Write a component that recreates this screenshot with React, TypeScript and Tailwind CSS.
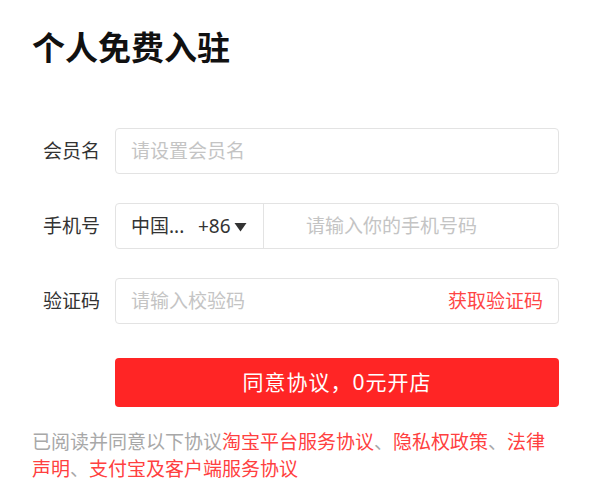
import { useState } from 'react'

const fieldClass =
  'h-[46px] w-[444px] rounded-[4px] border border-[#e3e3e3] bg-white text-[19px] text-[#333]'

function Label({ children }: { children: string }) {
  return <div className="mr-[15px] w-[68px] text-right text-[19px] leading-[46px] text-[#333]">{children}</div>
}

export default function App() {
  const [name, setName] = useState('')
  const [phone, setPhone] = useState('')
  const [code, setCode] = useState('')

  return (
    <div className="min-h-[495px] w-[600px] bg-white px-8 pt-[28px] font-['Noto_Sans','Noto_Sans_CJK_SC',sans-serif]">
      <h1 className="text-[33px] font-bold leading-[40px] text-[#111]">个人免费入驻</h1>

      <div className="mt-[60px] flex items-center">
        <Label>会员名</Label>
        <input
          value={name}
          onChange={(e) => setName(e.target.value)}
          placeholder="请设置会员名"
          className={`${fieldClass} px-[15px] outline-none placeholder:text-[#c4c4c4]`}
        />
      </div>

      <div className="mt-[29px] flex items-center">
        <Label>手机号</Label>
        <div className={`${fieldClass} flex items-center`}>
          <div className="flex h-full w-[148px] items-center border-r border-[#e3e3e3] pl-[15px]">
            <span className="w-[67px]">中国...</span>
            <span>+86</span>
            <svg width="13" height="10" viewBox="0 0 13 10" className="ml-[3px] mt-[2px]">
              <path d="M0.5 1h12L6.5 9.5z" fill="#333" />
            </svg>
          </div>
          <input
            value={phone}
            onChange={(e) => setPhone(e.target.value)}
            placeholder="请输入你的手机号码"
            className="h-full min-w-0 flex-1 bg-transparent pl-[42px] pr-[15px] outline-none placeholder:text-[#c4c4c4]"
          />
        </div>
      </div>

      <div className="mt-[29px] flex items-center">
        <Label>验证码</Label>
        <div className={`${fieldClass} flex items-center pl-[15px] pr-[15px]`}>
          <input
            value={code}
            onChange={(e) => setCode(e.target.value)}
            placeholder="请输入校验码"
            className="h-full min-w-0 flex-1 bg-transparent outline-none placeholder:text-[#c4c4c4]"
          />
          <button className="text-[#ff4545]">获取验证码</button>
        </div>
      </div>

      <button className="ml-[83px] mt-[34px] h-[49px] w-[444px] rounded-[4px] bg-[#ff2525] text-[21px] tracking-[1px] text-white">
        同意协议，0元开店
      </button>

      <p className="mt-[22px] w-[527px] text-[19px] leading-[27px] text-[#a8a8a8]">
        已阅读并同意以下协议
        <span className="text-[#ff4040]">淘宝平台服务协议</span>、
        <span className="text-[#ff4040]">隐私权政策</span>、
        <span className="text-[#ff4040]">法律声明</span>、
        <span className="text-[#ff4040]">支付宝及客户端服务协议</span>
      </p>
    </div>
  )
}
